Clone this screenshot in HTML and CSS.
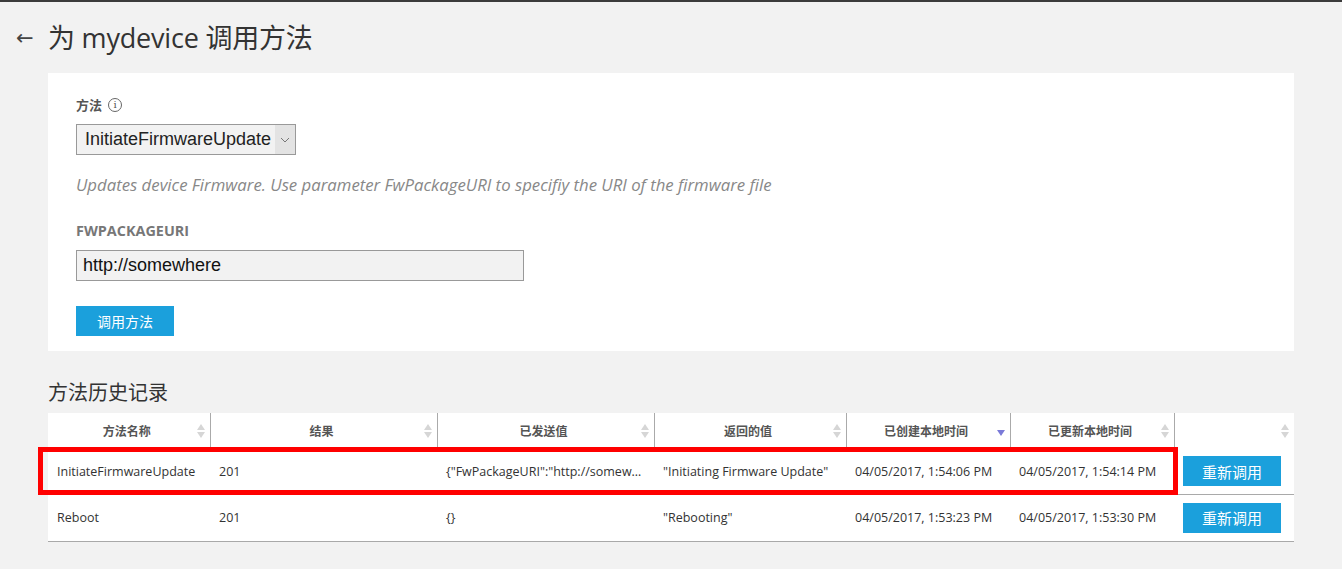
FILE: index.html
```html
<!DOCTYPE html>
<html lang="zh">
<head>
<meta charset="utf-8">
<title>为 mydevice 调用方法</title>
<link rel="stylesheet" href="styles.css">
</head>
<body>
<header class="page-head">
  <span class="back">&#8592;</span>
  <h1 class="title">为 mydevice 调用方法</h1>
</header>

<section class="card">
  <div class="label">方法 <span class="info">i</span></div>
  <div class="select">
    <span class="select-text">InitiateFirmwareUpdate</span>
    <span class="select-arrow"><svg width="10" height="6" viewBox="0 0 10 6"><path d="M1 1l4 4 4-4" fill="none" stroke="#777" stroke-width="1"/></svg></span>
  </div>
  <p class="desc">Updates device Firmware. Use parameter FwPackageURI to specifiy the URI of the firmware file</p>
  <div class="param-label">FWPACKAGEURI</div>
  <div class="input">http://somewhere</div>
  <button class="primary">调用方法</button>
</section>

<h2 class="section-title">方法历史记录</h2>

<div class="table-wrap">
  <table class="history">
    <colgroup>
      <col class="c1"><col class="c2"><col class="c3"><col class="c4"><col class="c5"><col class="c6"><col class="c7">
    </colgroup>
    <thead>
      <tr>
        <th><span>方法名称</span><i class="sort"></i></th>
        <th><span>结果</span><i class="sort"></i></th>
        <th><span>已发送值</span><i class="sort"></i></th>
        <th><span>返回的值</span><i class="sort"></i></th>
        <th><span>已创建本地时间</span><i class="sort-desc"></i></th>
        <th><span>已更新本地时间</span><i class="sort"></i></th>
        <th class="last"><i class="sort"></i></th>
      </tr>
    </thead>
    <tbody>
      <tr class="row1">
        <td>InitiateFirmwareUpdate</td>
        <td>201</td>
        <td>{"FwPackageURI":"http://somew…</td>
        <td>"Initiating Firmware Update"</td>
        <td>04/05/2017, 1:54:06 PM</td>
        <td>04/05/2017, 1:54:14 PM</td>
        <td><button class="primary small">重新调用</button></td>
      </tr>
      <tr class="row2">
        <td>Reboot</td>
        <td>201</td>
        <td>{}</td>
        <td>"Rebooting"</td>
        <td>04/05/2017, 1:53:23 PM</td>
        <td>04/05/2017, 1:53:30 PM</td>
        <td><button class="primary small">重新调用</button></td>
      </tr>
    </tbody>
  </table>
  <div class="highlight"></div>
</div>
</body>
</html>
```

FILE: styles.css
```css
* { box-sizing: border-box; }
html, body { margin: 0; padding: 0; }
body {
  background: #f2f2f2;
  border-top: 2px solid #3b3b3b;
  font-family: "Open Sans", "Noto Sans CJK SC", sans-serif;
  color: #333;
  height: 569px;
  overflow: hidden;
}
.page-head {
  display: flex;
  align-items: center;
  padding: 16px 0 0 16px;
  height: 56px;
}
.back {
  font-family: "DejaVu Sans", sans-serif;
  font-size: 21px;
  color: #444;
  width: 32px;
  line-height: 40px;
}
.title {
  margin: 0;
  font-weight: normal;
  font-size: 27px;
  line-height: 40px;
  color: #333;
  letter-spacing: -0.2px;
}
.card {
  margin: 15px 48px 0 48px;
  background: #fff;
  height: 278px;
  padding: 22px 28px 0 28px;
}
.label {
  font-size: 13px;
  font-weight: bold;
  color: #555;
  line-height: 20px;
  display: flex;
  align-items: center;
  gap: 6px;
}
.info {
  display: inline-flex;
  align-items: center;
  justify-content: center;
  width: 14px;
  height: 14px;
  border: 1px solid #666;
  border-radius: 50%;
  font-size: 10px;
  font-weight: normal;
  font-family: "DejaVu Serif", serif;
  color: #555;
  line-height: 1;
}
.select {
  margin-top: 9px;
  width: 220px;
  height: 31px;
  border: 1px solid #999;
  background: #f2f2f2;
  display: flex;
  align-items: stretch;
}
.select-text {
  flex: 1;
  font-family: "Liberation Sans", Arial, sans-serif;
  font-size: 18px;
  line-height: 29px;
  padding-left: 8px;
  color: #222;
  white-space: nowrap;
}
.select-arrow {
  width: 20px;
  background: #e3e3e3;
  display: flex;
  align-items: center;
  justify-content: center;
}
.desc {
  margin: 20px 0 0 0;
  font-style: italic;
  font-size: 16.75px;
  line-height: 20px;
  color: #888;
  white-space: nowrap;
}
.param-label {
  margin-top: 26px;
  font-size: 14.4px;
  font-weight: bold;
  color: #777;
  line-height: 20px;
}
.input {
  margin-top: 9px;
  width: 448px;
  height: 31px;
  border: 1px solid #999;
  background: #f2f2f2;
  font-family: "Liberation Sans", Arial, sans-serif;
  font-size: 18px;
  line-height: 29px;
  padding-left: 6px;
  color: #111;
}
.primary {
  margin-top: 25px;
  display: block;
  width: 98px;
  height: 30px;
  border: 0;
  background: #1ba0dc;
  color: #fff;
  font-family: "Noto Sans CJK SC", sans-serif;
  font-size: 14px;
  padding: 0;
}
.primary.small {
  margin: 0;
  font-size: 15px;
}
.section-title {
  margin: 28px 0 0 48px;
  font-weight: normal;
  font-size: 20px;
  line-height: 28px;
  color: #333;
}
.table-wrap {
  position: relative;
  margin: 6px 48px 0 48px;
}
.history {
  width: 1246px;
  border-collapse: collapse;
  table-layout: fixed;
  background: #fff;
}
.c1 { width: 162px; }
.c2 { width: 227px; }
.c3 { width: 217px; }
.c4 { width: 192px; }
.c5 { width: 164px; }
.c6 { width: 164px; }
.c7 { width: 120px; }
.history th {
  height: 36px;
  position: relative;
  font-size: 12px;
  font-weight: bold;
  color: #555;
  text-align: center;
  border-right: 1px solid #aaa;
  padding: 0 18px 0 0;
}
.history th.last { border-right: 0; }
.history th span { display: inline-block; padding-left: 14px; }
.sort, .sort-desc {
  position: absolute;
  right: 5px;
  top: 11px;
  width: 8px;
  height: 14px;
}
.sort::before, .sort::after {
  content: "";
  position: absolute;
  left: 0;
  border-left: 4px solid transparent;
  border-right: 4px solid transparent;
}
.sort::before { top: 0; border-bottom: 6px solid #d6d6d6; }
.sort::after { bottom: 0; border-top: 6px solid #d6d6d6; }
.sort-desc::after {
  content: "";
  position: absolute;
  left: 0;
  top: 6px;
  border-left: 4px solid transparent;
  border-right: 4px solid transparent;
  border-top: 6px solid #7a7ad8;
}
.history td {
  height: 45px;
  font-size: 12.5px;
  color: #333;
  padding: 0 9px;
  border-bottom: 1px solid #a9a9a9;
  white-space: nowrap;
  overflow: hidden;
}
.history .row2 td { height: 47px; }
.highlight {
  position: absolute;
  left: -10px;
  top: 34px;
  width: 1140px;
  height: 48px;
  border: 5px solid #ff0000;
  pointer-events: none;
}
```
